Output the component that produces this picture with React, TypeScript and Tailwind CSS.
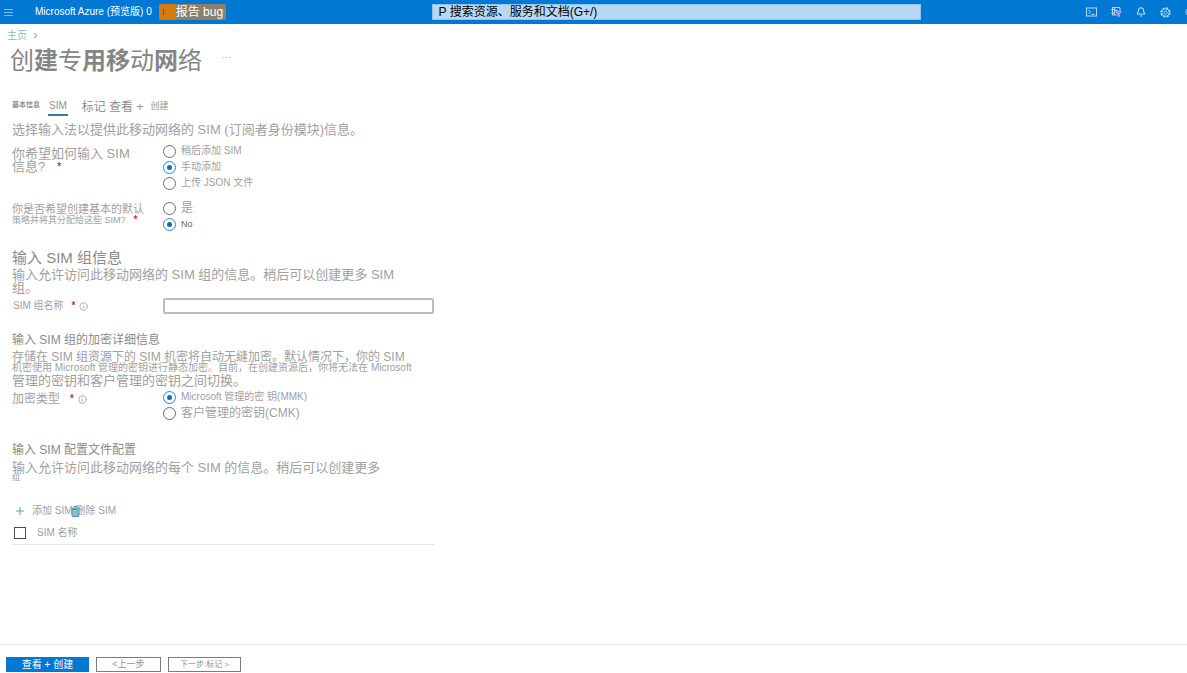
import type { InputHTMLAttributes, ReactNode } from "react";
import { clsx } from "clsx";
import { Bell, ChevronRight, CircleHelp, Info, Plus } from "lucide-react";

function MenuIcon() {
  return (
    <svg width="9" height="8" viewBox="0 0 9 8" stroke="currentColor">
      <path d="M0 1.500h9M0 4.500h9M0 7.500h9" />
    </svg>
  );
}

function ShellIcon() {
  return (
    <svg width="11" height="10" viewBox="0 0 11 10" fill="none" stroke="currentColor">
      <rect x="0.5" y="1" width="10" height="8" />
      <path d="M2.500 3l2 2-2 2M5.500 7.300h3" />
    </svg>
  );
}

function DirectoryIcon() {
  return (
    <svg width="11" height="12" viewBox="0 0 11 12" fill="none" stroke="currentColor">
      <path d="M1.500 1.500h7.500v4M1.500 1.500v7.500h4M3.700 1.500v7.500M.3 3.500h3.400M.3 7h3.400M3.700 4.500h3" />
      <path d="M4.800 5.700h5.400L8.300 8v2.800l-1.500-.8V8z" fill="#a78bd0" stroke="#c9c4ee" strokeWidth="0.7" />
    </svg>
  );
}

function GearIcon() {
  return (
    <svg width="11" height="11" viewBox="0 0 11 11" fill="none" stroke="currentColor">
      <circle cx="5.5" cy="5.5" r="4.500" strokeWidth="1.400" strokeDasharray="2.200 1.330" />
      <circle cx="5.5" cy="5.5" r="3.700" strokeWidth="0.800" />
      <circle cx="5.5" cy="5.5" r="1.600" strokeWidth="0.900" />
    </svg>
  );
}

function TrashIcon() {
  return (
    <svg width="9" height="11" viewBox="0 0 9 11" fill="none">
      <path d="M3 1V.5h3V1" stroke="#3f8fc4" />
      <rect x="0.5" y="1.500" width="8" height="2" fill="#5ba3d0" />
      <path d="M1 3.500h7v6.200q0 .8-.8.8H1.800q-.8 0-.8-.8z" fill="#86bfe2" stroke="#4a97c8" />
    </svg>
  );
}

function Required() {
  return <span className="text-[10px] font-bold leading-[10px] text-[#c0394b]">*</span>;
}

function InfoDot() {
  return <Info size={9} strokeWidth={2} className="text-[#9a9a9a]" />;
}

type RadioProps = InputHTMLAttributes<HTMLInputElement> & { children: ReactNode; size?: string };

function Radio({ children, size = "text-[10px]", ...rest }: RadioProps) {
  return (
    <label className="flex h-4 items-center gap-[5px] text-[#a0a0a0]">
      <input
        type="radio"
        className="grid size-[13px] shrink-0 appearance-none place-items-center rounded-full border border-[#6a6a6a] bg-white before:size-[5px] before:rounded-full checked:border-[#2d82c4] checked:before:bg-[#0f6cbd]"
        {...rest}
      />
      <span className={clsx("whitespace-nowrap leading-none", size)}>{children}</span>
    </label>
  );
}

function Field({ label, className, children }: { label: ReactNode; className?: string; children: ReactNode }) {
  return (
    <div className={clsx("grid grid-cols-[151px_1fr]", className)}>
      <div className="text-[#a0a0a0]">{label}</div>
      <div>{children}</div>
    </div>
  );
}

function TopBar() {
  return (
    <header className="flex h-6 items-center bg-[#0078d4] text-white">
      <button type="button" aria-label="菜单" className="ml-1 text-[#7fbdee]">
        <MenuIcon />
      </button>
      <a href="#home" className="ml-[22px] whitespace-nowrap text-[10px] leading-none">
        Microsoft Azure (预览版) 0
      </a>
      <button
        type="button"
        className="ml-[7px] flex h-4 items-center gap-3 rounded-xs bg-linear-to-r from-[#d87a0b] from-25% to-[#8d8068] to-25% pr-[3px] pl-1 text-xs leading-none whitespace-nowrap"
      >
        <span className="h-1.5 w-px bg-[#8f4a10]" />
        报告 bug
      </button>
      <div className="flex flex-1 justify-center">
        <input
          type="search"
          aria-label="搜索"
          placeholder="P 搜索资源、服务和文档(G+/)"
          className="ml-10 h-4 w-[489px] border border-[#8fc4ee] bg-[#b7d8f4] px-1.5 text-xs leading-none placeholder:text-black"
        />
      </div>
      <nav className="flex items-center gap-3.5 overflow-hidden text-[#b5dcf7]">
        <button type="button" aria-label="Cloud Shell">
          <ShellIcon />
        </button>
        <button type="button" aria-label="目录">
          <DirectoryIcon />
        </button>
        <button type="button" aria-label="通知">
          <Bell size={10} strokeWidth={2.5} />
        </button>
        <button type="button" aria-label="设置">
          <GearIcon />
        </button>
        <button type="button" aria-label="帮助" className="w-0.5 overflow-hidden">
          <CircleHelp size={10} />
        </button>
      </nav>
    </header>
  );
}

function Tabs() {
  return (
    <nav className="mt-6 flex h-[19px] items-center text-[#909090]">
      <button type="button" className="mr-2 pb-1 text-[7px] font-bold leading-none">
        基本信息
      </button>
      <button type="button" className="h-full border-b-2 border-[#2f7fa8] px-px text-[10px] leading-none">
        SIM
      </button>
      <button type="button" className="ml-3.5 text-xs leading-none">
        标记 查看 +
      </button>
      <button type="button" className="ml-[7px] text-[9px] leading-none">
        创建
      </button>
    </nav>
  );
}

export default function App() {
  return (
    <div className="flex min-h-screen flex-col bg-white font-['Liberation_Sans','Noto_Sans_CJK_SC',sans-serif]">
      <TopBar />
      <main className="flex-1 pl-3">
        <nav className="-ml-[5px] mt-1.5 flex h-[11px] items-center gap-1 text-[10px] leading-none">
          <a href="#home" className="text-[#8fb4cc]">
            主页
          </a>
          <ChevronRight size={9} strokeWidth={3} className="text-[#b0b0b0]" />
        </nav>
        <div className="-ml-0.5 mt-2 flex h-6 items-center gap-5">
          <h1 className="text-2xl leading-none text-[#858585]">
            创<b>建</b>专<b>用移</b>动<b>网</b>络
          </h1>
          <button type="button" aria-label="更多" className="pb-2 text-[9px] leading-none text-[#a8a8a8]">
            ···
          </button>
        </div>
        <Tabs />

        <p className="mt-[7px] text-[13px] leading-[13px] text-[#a0a0a0]">
          选择输入法以提供此移动网络的 SIM (订阅者身份模块)信息。
        </p>

        <Field
          className="mt-[7px]"
          label={
            <div className="pt-1 text-[13px] leading-[13px]">
              你希望如何输入 SIM
              <br />
              <span className="flex items-center gap-3">
                信息?
                <Required />
              </span>
            </div>
          }
        >
          <Radio name="add-sims">稍后添加 SIM</Radio>
          <Radio name="add-sims" defaultChecked>
            手动添加
          </Radio>
          <Radio name="add-sims">上传 JSON 文件</Radio>
        </Field>

        <Field
          className="mt-[9px]"
          label={
            <div className="flex flex-col pt-1">
              <span className="text-[11px] leading-[11px]">你是否希望创建基本的默认</span>
              <span className="flex items-end gap-2 text-[9px] leading-[10px]">
                策略并将其分配给这些 SIM?
                <Required />
              </span>
            </div>
          }
        >
          <Radio name="default-policy" size="text-xs">
            是
          </Radio>
          <Radio name="default-policy" size="text-[9px] text-[#666]" defaultChecked>
            No
          </Radio>
        </Field>

        <h2 className="mt-[18px] text-[15px] leading-4 text-[#8a8a8a]">输入 SIM 组信息</h2>
        <p className="mt-0.5 text-[13px] leading-[13px] text-[#a0a0a0]">
          输入允许访问此移动网络的 SIM 组的信息。稍后可以创建更多 SIM
          <br />
          组。
        </p>
        <Field
          className="mt-1 h-4 items-center"
          label={
            <label htmlFor="sim-group" className="flex items-center gap-2 pl-px text-[10px] leading-none">
              SIM 组名称 <Required />
              <span className="-ml-1">
                <InfoDot />
              </span>
            </label>
          }
        >
          <input
            id="sim-group"
            type="text"
            className="block h-4 w-[271px] rounded-xs border-2 border-[#bdbdbd] px-1 text-[10px]"
          />
        </Field>

        <h3 className="mt-5 text-xs leading-3 text-[#8a8a8a]">输入 SIM 组的加密详细信息</h3>
        <p className="mt-1.5 whitespace-nowrap text-[#a0a0a0]">
          <span className="block text-xs leading-[11px]">
            存储在 SIM 组资源下的 SIM 机密将自动无缝加密。默认情况下，你的 SIM
          </span>
          <span className="block text-[10px] leading-[10px]">
            机密使用 Microsoft 管理的密钥进行静态加密。目前，在创建资源后，你将无法在 Microsoft
          </span>
          <span className="block text-[13px] leading-4">管理的密钥和客户管理的密钥之间切换。</span>
        </p>
        <Field
          label={
            <div className="flex items-center gap-2.5 pt-1 text-xs leading-3">
              加密类型 <Required />
              <span className="-ml-1.5">
                <InfoDot />
              </span>
            </div>
          }
        >
          <Radio name="encryption" defaultChecked>
            Microsoft 管理的密 钥(MMK)
          </Radio>
          <Radio name="encryption" size="text-xs">
            客户管理的密钥(CMK)
          </Radio>
        </Field>

        <h3 className="mt-[23px] text-xs leading-3 text-[#8a8a8a]">输入 SIM 配置文件配置</h3>
        <p className="mt-[5px] text-[13px] leading-[13px] text-[#a0a0a0]">
          输入允许访问此移动网络的每个 SIM 的信息。稍后可以创建更多
          <span className="block text-[8px] leading-2">组</span>
        </p>

        <div className="mt-[21px] flex h-4 items-center text-[10px] leading-none text-[#9aa0a5]">
          <button type="button" className="flex items-center gap-1.5 pl-0.5">
            <Plus size={12} strokeWidth={2} className="text-[#4a9cbd]" />
            添加 SIM
          </button>
          <button type="button" className="-ml-0.5 flex items-center">
            <TrashIcon />
            <span className="-ml-1">删除 SIM</span>
          </button>
        </div>
        <table className="mt-[3px] w-[422px] text-left text-[10px] leading-none text-[#a0a0a0]">
          <thead>
            <tr className="h-[22px] border-b border-[#e4e4e4]">
              <th className="w-[25px] p-0 pl-0.5">
                <input
                  type="checkbox"
                  aria-label="全选"
                  className="block size-3 appearance-none border border-[#4a4a4a] bg-white"
                />
              </th>
              <th className="p-0 font-normal">SIM 名称</th>
            </tr>
          </thead>
        </table>
      </main>

      <footer className="flex gap-[7px] border-t border-[#e6e6e6] px-1.5 pt-3 pb-px leading-none">
        <button type="button" className="h-[15px] w-[83px] bg-[#0078d4] text-[10px] leading-none text-white">
          查看 + 创建
        </button>
        <button type="button" className="h-[15px] w-[65px] border border-[#7a7a7a] text-[9px] leading-none text-[#8f8f8f]">
          &lt;上一步
        </button>
        <button type="button" className="h-[15px] w-[73px] border border-[#7a7a7a] text-[8px] leading-none text-[#8f8f8f]">
          下一步:标记 &gt;
        </button>
      </footer>
    </div>
  );
}
